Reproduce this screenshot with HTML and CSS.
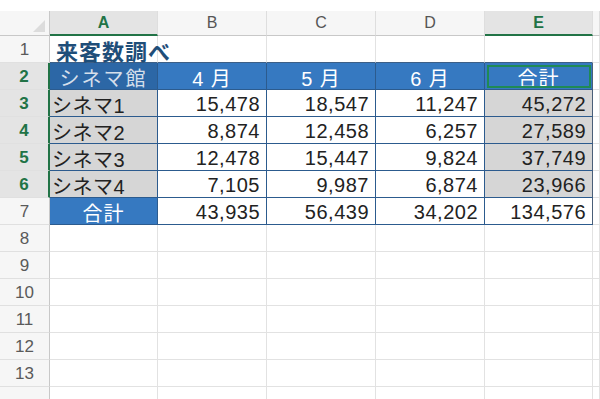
FILE: index.html
```html
<!DOCTYPE html>
<html lang="ja">
<head>
    <meta charset="UTF-8">
    <title>来客数調べ</title>
    <link rel="stylesheet" href="styles.css">
</head>
<body>
    <div class="top-strip"></div>
    <div class="sheet">
        <!-- column headers -->
        <div class="corner"><span class="tri"></span></div>
        <div class="ch sel">A</div>
        <div class="ch">B</div>
        <div class="ch">C</div>
        <div class="ch">D</div>
        <div class="ch sel">E</div>
        <div class="ch"></div>

        <!-- row 1 -->
        <div class="rh">1</div>
        <div class="c title top">来客数調べ</div>
        <div class="c top"></div>
        <div class="c top"></div>
        <div class="c top"></div>
        <div class="c top"></div>
        <div class="c"></div>

        <!-- row 2 -->
        <div class="rh sel">2</div>
        <div class="c blue dim">シネマ館</div>
        <div class="c blue">4 月</div>
        <div class="c blue">5 月</div>
        <div class="c blue">6 月</div>
        <div class="c blue last active">合計</div>
        <div class="c"></div>

        <!-- row 3 -->
        <div class="rh sel">3</div>
        <div class="c tb gray name">シネマ1</div>
        <div class="c tb num">15,478</div>
        <div class="c tb num">18,547</div>
        <div class="c tb num">11,247</div>
        <div class="c tb gray num last">45,272</div>
        <div class="c"></div>

        <!-- row 4 -->
        <div class="rh sel">4</div>
        <div class="c tb gray name">シネマ2</div>
        <div class="c tb num">8,874</div>
        <div class="c tb num">12,458</div>
        <div class="c tb num">6,257</div>
        <div class="c tb gray num last">27,589</div>
        <div class="c"></div>

        <!-- row 5 -->
        <div class="rh sel">5</div>
        <div class="c tb gray name">シネマ3</div>
        <div class="c tb num">12,478</div>
        <div class="c tb num">15,447</div>
        <div class="c tb num">9,824</div>
        <div class="c tb gray num last">37,749</div>
        <div class="c"></div>

        <!-- row 6 -->
        <div class="rh sel">6</div>
        <div class="c tb gray name">シネマ4</div>
        <div class="c tb num">7,105</div>
        <div class="c tb num">9,987</div>
        <div class="c tb num">6,874</div>
        <div class="c tb gray num last">23,966</div>
        <div class="c"></div>

        <!-- row 7 -->
        <div class="rh">7</div>
        <div class="c blue">合計</div>
        <div class="c tb num">43,935</div>
        <div class="c tb num">56,439</div>
        <div class="c tb num">34,202</div>
        <div class="c tb num last">134,576</div>
        <div class="c"></div>

        <div class="rh">8</div><div class="c"></div><div class="c"></div><div class="c"></div><div class="c"></div><div class="c"></div><div class="c"></div>
        <div class="rh">9</div><div class="c"></div><div class="c"></div><div class="c"></div><div class="c"></div><div class="c"></div><div class="c"></div>
        <div class="rh">10</div><div class="c"></div><div class="c"></div><div class="c"></div><div class="c"></div><div class="c"></div><div class="c"></div>
        <div class="rh">11</div><div class="c"></div><div class="c"></div><div class="c"></div><div class="c"></div><div class="c"></div><div class="c"></div>
        <div class="rh">12</div><div class="c"></div><div class="c"></div><div class="c"></div><div class="c"></div><div class="c"></div><div class="c"></div>
        <div class="rh">13</div><div class="c"></div><div class="c"></div><div class="c"></div><div class="c"></div><div class="c"></div><div class="c"></div>
        <div class="rh"></div><div class="c"></div><div class="c"></div><div class="c"></div><div class="c"></div><div class="c"></div><div class="c"></div>
    </div>
</body>
</html>
```

FILE: styles.css
```css
body {
    margin: 0;
    padding: 0;
    width: 600px;
    height: 399px;
    overflow: hidden;
    background-color: #fff;
    font-family: "Liberation Sans", "Noto Sans CJK JP", sans-serif;
}

.top-strip {
    height: 11px;
    background-color: #fff;
}

.sheet {
    display: grid;
    grid-template-columns: 50px 108px 109px 109px 109px 108px 7px;
    grid-template-rows: 25px repeat(14, 27px);
}

.sheet > div {
    box-sizing: border-box;
    display: flex;
    align-items: center;
    overflow: hidden;
    white-space: nowrap;
}

/* headers */
.corner {
    position: relative;
    background-color: #f6f6f6;
    border-right: 1px solid #c8c8c8;
    border-bottom: 1px solid #c8c8c8;
}

.tri {
    position: absolute;
    right: 4px;
    bottom: 3px;
    width: 0;
    height: 0;
    border-left: 12px solid transparent;
    border-bottom: 12px solid #dcdcdc;
}

.ch {
    justify-content: center;
    background-color: #f6f6f6;
    border-right: 1px solid #dedede;
    border-bottom: 1px solid #c8c8c8;
    color: #555;
    font-size: 16px;
}

.ch.sel {
    background-color: #e4e4e4;
    color: #217346;
    font-weight: bold;
    border-bottom: 2px solid #217346;
}

.rh {
    justify-content: center;
    background-color: #f6f6f6;
    border-right: 1px solid #c8c8c8;
    border-bottom: 1px solid #e0e0e0;
    color: #5a5a5a;
    font-size: 17px;
    padding-top: 2px;
}

.rh.sel {
    background-color: #e4e4e4;
    color: #217346;
    font-weight: bold;
    border-right: 2px solid #217346;
}

/* cells */
.c {
    border-right: 1px solid #e2e2e2;
    border-bottom: 1px solid #e2e2e2;
    padding-top: 2px;
    font-size: 20px;
    color: #222;
}

.c.top {
    border-bottom-color: #3c5f86;
}

.sheet > .title {
    overflow: visible;
    padding-left: 6px;
    font-family: "Noto Sans CJK JP", sans-serif;
    font-weight: bold;
    font-size: 22px;
    letter-spacing: 1px;
    color: #1f4e79;
}

.blue {
    justify-content: center;
    background-color: #3679c1;
    color: #fff;
    border-right-color: #2c5b8e;
    border-bottom-color: #2c5b8e;
    letter-spacing: 1px;
}

.blue.dim {
    background-color: #2c67a6;
    color: #d5dfeb;
    letter-spacing: 2px;
}

.tb {
    border-right-color: #2c5b8e;
    border-bottom-color: #2c5b8e;
}

.gray {
    background-color: #d6d6d6;
}

.num {
    justify-content: flex-end;
    padding-right: 6px;
    letter-spacing: 0.5px;
}

.name {
    padding-left: 2px;
    letter-spacing: 0.5px;
}

.last {
    border-right-color: #4a5f78;
}

.active {
    outline: 2px solid #1f8a55;
    outline-offset: -4px;
}
```
